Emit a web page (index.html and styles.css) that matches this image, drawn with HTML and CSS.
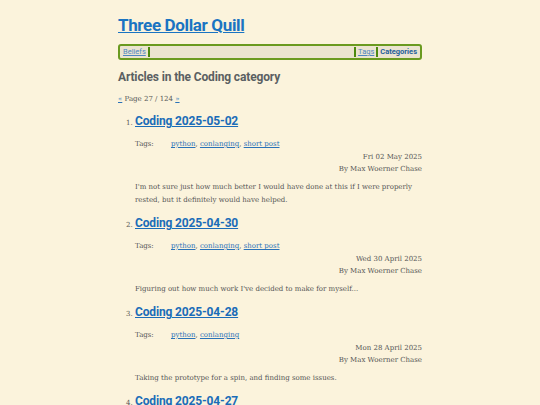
FILE: index.html
```html
<!DOCTYPE html>
<html lang="en">
<head>
<meta charset="utf-8">
<title>Three Dollar Quill</title>
<link rel="stylesheet" href="styles.css">
</head>
<body>
<div class="page">
  <h1 class="site-title"><a href="#">Three Dollar Quill</a></h1>
  <nav class="menu">
    <a class="menu-item" href="#">Beliefs</a>
    <span class="sep"></span>
    <span class="menu-fill"></span>
    <span class="sep"></span>
    <a class="menu-item" href="#">Tags</a>
    <span class="sep"></span>
    <a class="menu-item active" href="#">Categories</a>
  </nav>
  <h2 class="cat-title">Articles in the Coding category</h2>
  <p class="pager"><a href="#">«</a> Page 27 / 124 <a href="#">»</a></p>
  <ol class="articles" start="1">
    <li class="article">
      <h3 class="art-title"><a href="#">Coding 2025-05-02</a></h3>
      <div class="tags"><span class="tags-label">Tags:</span><span><a href="#">python</a>, <a href="#">conlanging</a>, <a href="#">short post</a></span></div>
      <div class="meta"><div>Fri 02 May 2025</div><div>By Max Woerner Chase</div></div>
      <p class="summary">I'm not sure just how much better I would have done at this if I were properly rested, but it definitely would have helped.</p>
    </li>
    <li class="article">
      <h3 class="art-title"><a href="#">Coding 2025-04-30</a></h3>
      <div class="tags"><span class="tags-label">Tags:</span><span><a href="#">python</a>, <a href="#">conlanging</a>, <a href="#">short post</a></span></div>
      <div class="meta"><div>Wed 30 April 2025</div><div>By Max Woerner Chase</div></div>
      <p class="summary">Figuring out how much work I've decided to make for myself...</p>
    </li>
    <li class="article">
      <h3 class="art-title"><a href="#">Coding 2025-04-28</a></h3>
      <div class="tags"><span class="tags-label">Tags:</span><span><a href="#">python</a>, <a href="#">conlanging</a></span></div>
      <div class="meta"><div>Mon 28 April 2025</div><div>By Max Woerner Chase</div></div>
      <p class="summary">Taking the prototype for a spin, and finding some issues.</p>
    </li>
    <li class="article">
      <h3 class="art-title"><a href="#">Coding 2025-04-27</a></h3>
      <div class="tags"><span class="tags-label">Tags:</span><span><a href="#">python</a>, <a href="#">conlanging</a></span></div>
      <div class="meta"><div>Sun 27 April 2025</div><div>By Max Woerner Chase</div></div>
      <p class="summary">More work on the prototype.</p>
    </li>
  </ol>
</div>
</body>
</html>
```
FILE: styles.css
```css
html, body {
  margin: 0;
  padding: 0;
  background: #fbf3dc;
}
body {
  font-family: "DejaVu Serif", serif;
  color: #555;
  font-size: 8px;
}
.page {
  width: 304px;
  margin: 0 auto;
  padding-top: 13px;
}
a {
  color: #2a72b8;
}
.site-title {
  font-family: Roboto, "Noto Sans", sans-serif;
  font-size: 17px;
  font-weight: 700;
  margin: 0 0 7px 0;
  line-height: 24px;
  letter-spacing: -0.35px;
}
.site-title a {
  color: #1a74c2;
}
.menu {
  display: flex;
  align-items: center;
  border: 2px solid #6a9a20;
  border-radius: 3px;
  background: #ebe4d0;
  height: 12px;
  padding: 0 1px;
  font-family: Roboto, "Noto Sans", sans-serif;
  font-size: 7.5px;
  line-height: 12px;
  overflow: hidden;
}
.menu-item {
  padding: 0 2px;
  color: #4e86c0;
  white-space: nowrap;
}
.sep {
  width: 2px;
  height: 10px;
  background: #4d8a10;
}
.menu-fill {
  flex: 1;
}
.menu-item.active {
  font-weight: 700;
  color: #1f5e9a;
  text-decoration: none;
}
.cat-title {
  font-family: Roboto, "Noto Sans", sans-serif;
  font-size: 12px;
  font-weight: 700;
  color: #5a5f62;
  margin: 8px 0 0 0;
  line-height: 18px;
  letter-spacing: -0.15px;
}
.pager {
  margin: 7px 0 0 0;
  font-size: 7px;
  line-height: 12px;
}
.articles {
  margin: 6px 0 0 0;
  padding-left: 17px;
  font-size: 7px;
}
.article::marker {
  font-size: 7px;
}
.art-title {
  font-family: Roboto, "Noto Sans", sans-serif;
  font-size: 12px;
  font-weight: 700;
  margin: 0;
  line-height: 20px;
  display: inline-block;
  letter-spacing: -0.15px;
}
.art-title a {
  color: #1a6cb8;
}
.tags {
  display: flex;
  margin-top: 8px;
  line-height: 11px;
}
.tags-label {
  width: 36px;
}
.meta {
  text-align: right;
  line-height: 12px;
  margin-top: 1px;
}
.summary {
  margin: 6px 0 6px 0;
  line-height: 13px;
}
```
